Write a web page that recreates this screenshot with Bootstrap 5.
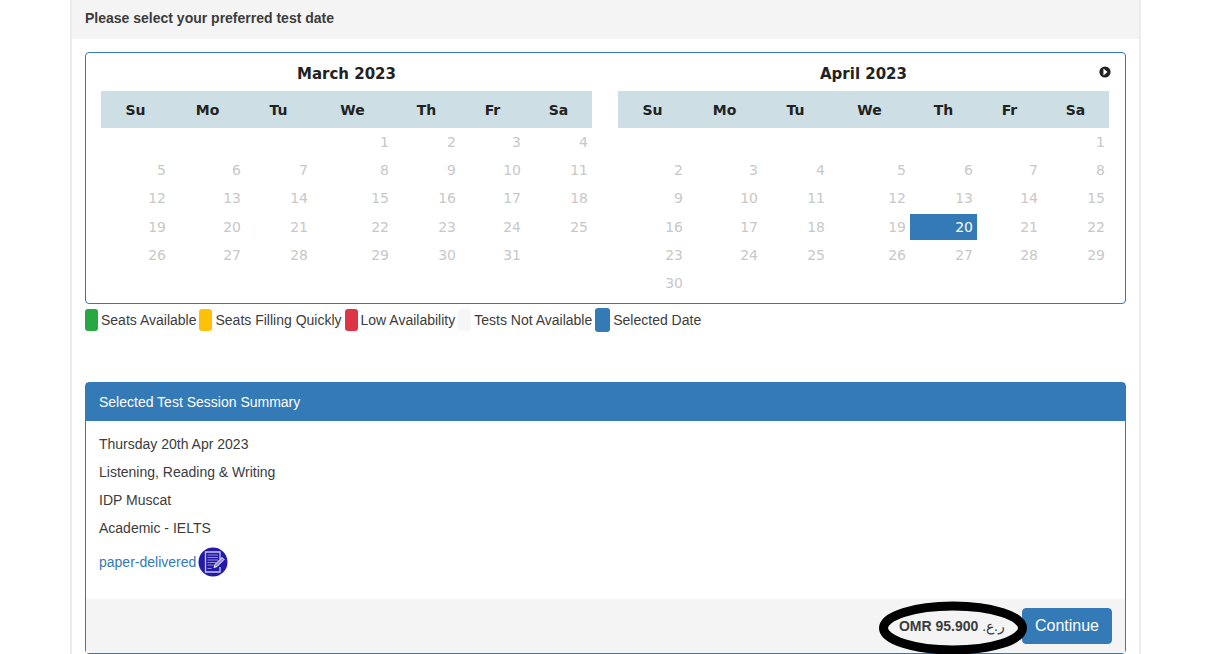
<!DOCTYPE html>
<html lang="en">
<head>
<meta charset="utf-8">
<meta name="viewport" content="width=device-width, initial-scale=1">
<title>Select test date</title>
<link href="https://cdn.jsdelivr.net/npm/bootstrap@5.3.0/dist/css/bootstrap.min.css" rel="stylesheet">
<style>
  :root { --brand: #337ab7; --soft: #f4f4f4; }
  body { font: 14px/20px "Liberation Sans", Arial, sans-serif; color: #3c3c3c; }
  .page { padding: 0 79px 0 70px; }
  .panel { border: solid #ececec; border-width: 0 2px; min-height: 100vh; }
  .panel-title { background: var(--soft); padding: 8px 13px 11px; font-size: 14px; line-height: 20px; }
  .panel-content { padding: 13px 13px 0; }
  .calendar { border: 1px solid var(--brand); border-radius: 4px; padding: 0 16px 6px 15px; font-family: "DejaVu Sans", Verdana, sans-serif; column-gap: 26px; }
  .month-title { font-size: 15px; font-weight: 700; line-height: 20px; color: #222; padding: 11px 0 7px; }
  .next-btn { right: -2px; top: 13px; line-height: 0; }
  .days { width: 100%; height: 206px; table-layout: fixed; border-collapse: separate; border-spacing: 0; }
  .days th { height: 37px; background: #cddfe4; color: #222; text-align: center; }
  .days td { padding: 1px 0; text-align: right; color: #c8c8c8; line-height: 20px; }
  .days td span { display: block; padding: 3px 4px 3px 0; }
  .days td[aria-selected] span { background: var(--brand); color: #fff; }
  .legend { column-gap: 3px; padding-top: 4px; }
  .swatch { width: 13px; height: 22px; border-radius: 3px; }
  .swatch-selected { width: 15px; height: 24px; background: var(--brand); }
  .swatch-none { background: #f6f6f6; }
  .summary { border: 1px solid var(--brand); border-radius: 4px; margin-top: 50px; }
  .summary-title { background: var(--brand); font-size: 14px; line-height: 20px; padding: 9px 13px; }
  .summary-body { padding: 13px 13px 22px; }
  .summary-body p { margin: 0 0 8px; }
  .summary-body a { color: var(--brand); }
  .delivery { column-gap: 2px; padding-top: 1px; }
  .summary-foot { background: var(--soft); padding: 9px 13px; column-gap: 17px; }
  .ring { right: -22px; top: -15px; width: 148px; height: 54px; pointer-events: none; z-index: 2; }
  .btn-continue { --bs-btn-bg: #337ab7; --bs-btn-border-color: #337ab7; --bs-btn-color: #fff; --bs-btn-hover-bg: #286090; --bs-btn-hover-color: #fff; --bs-btn-font-size: 16px; --bs-btn-padding-x: 12px; --bs-btn-padding-y: 6px; --bs-btn-line-height: 22px; --bs-btn-border-radius: 4px; }
</style>
</head>
<body>
<main class="container-fluid page">
  <section class="panel">
    <h1 class="panel-title fw-bold m-0">Please select your preferred test date</h1>
    <div class="panel-content">
      <div class="calendar d-flex">
        <div class="flex-fill w-50">
          <h2 class="month-title text-center m-0">March 2023</h2>
          <table class="days" data-offset="3" data-count="31"></table>
        </div>
        <div class="flex-fill w-50 position-relative">
          <h2 class="month-title text-center m-0">April 2023</h2>
          <button type="button" class="btn border-0 p-0 position-absolute next-btn" aria-label="Next month">
            <svg width="12" height="12" viewBox="0 0 12 12"><circle cx="6" cy="6" r="5.6" fill="#222"/><path d="M4.7 3v6L8.2 6z" fill="#fff" stroke="#fff" stroke-width=".5"/></svg>
          </button>
          <table class="days" data-offset="6" data-count="30" data-selected="20"></table>
        </div>
      </div>

      <div class="legend d-flex flex-wrap align-items-center">
        <span class="swatch" style="background:#28a745"></span><span>Seats Available</span>
        <span class="swatch" style="background:#ffc107"></span><span>Seats Filling Quickly</span>
        <span class="swatch" style="background:#dc3545"></span><span>Low Availability</span>
        <span class="swatch swatch-none"></span><span>Tests Not Available</span>
        <span class="swatch swatch-selected"></span><span>Selected Date</span>
      </div>

      <section class="summary">
        <h2 class="summary-title text-white m-0">Selected Test Session Summary</h2>
        <div class="summary-body">
          <p>Thursday 20th Apr 2023</p>
          <p>Listening, Reading &amp; Writing</p>
          <p>IDP Muscat</p>
          <p>Academic - IELTS</p>
          <div class="delivery d-flex align-items-center">
            <a href="#" class="text-decoration-none">paper-delivered</a>
            <svg width="30" height="30" viewBox="0 0 30 30" aria-hidden="true">
              <circle cx="15" cy="15" r="14.5" fill="#231aa8"/>
              <path d="M22 12V5H7.500v20H22v-5" fill="none" stroke="#c9c6ee" stroke-width="1.300"/>
              <path d="M9.500 8h10.500M9.500 10.500h10.500M9.500 13h10.500M9.500 15.500h8.500M9.500 18h6M9.500 21.500h4" stroke="#8f89d8" stroke-width="1.200"/>
              <path d="M16 20.500l1-3L24 10.500l2 2-7 7z" fill="#8f89d8" stroke="#fff" stroke-width="1" stroke-linejoin="round"/>
            </svg>
          </div>
        </div>
        <div class="summary-foot d-flex justify-content-end align-items-center">
          <div class="position-relative">
            <strong dir="rtl" class="d-block"><span class="fw-normal">ر.ع.</span> OMR 95.900</strong>
            <svg class="ring position-absolute" viewBox="0 0 148 54" aria-hidden="true"><ellipse cx="74" cy="27" rx="69.500" ry="22" fill="none" stroke="#000" stroke-width="9"/></svg>
          </div>
          <button type="button" class="btn btn-continue">Continue</button>
        </div>
      </section>
    </div>
  </section>
</main>
<script src="https://cdn.jsdelivr.net/npm/bootstrap@5.3.0/dist/js/bootstrap.bundle.min.js"></script>
<script>
  const names = ['Su', 'Mo', 'Tu', 'We', 'Th', 'Fr', 'Sa'];
  const widths = [69, 75, 67, 81, 67, 65, 67];
  const total = widths.reduce((a, b) => a + b);
  document.querySelectorAll('.days').forEach(table => {
    const offset = +table.dataset.offset, count = +table.dataset.count, selected = +table.dataset.selected;
    let html = '<colgroup>' + widths.map(w => `<col style="width:${w / total * 100}%">`).join('') + '</colgroup>';
    html += '<thead><tr>' + names.map(n => `<th scope="col">${n}</th>`).join('') + '</tr></thead><tbody>';
    for (let row = 0; row < 6; row++) {
      html += '<tr>';
      for (let col = 0; col < 7; col++) {
        const day = row * 7 + col - offset + 1;
        const text = day > 0 && day <= count ? day : '&nbsp;';
        html += `<td${day === selected ? ' aria-selected="true"' : ''}><span>${text}</span></td>`;
      }
      html += '</tr>';
    }
    table.innerHTML = html + '</tbody>';
  });
</script>
</body>
</html>
